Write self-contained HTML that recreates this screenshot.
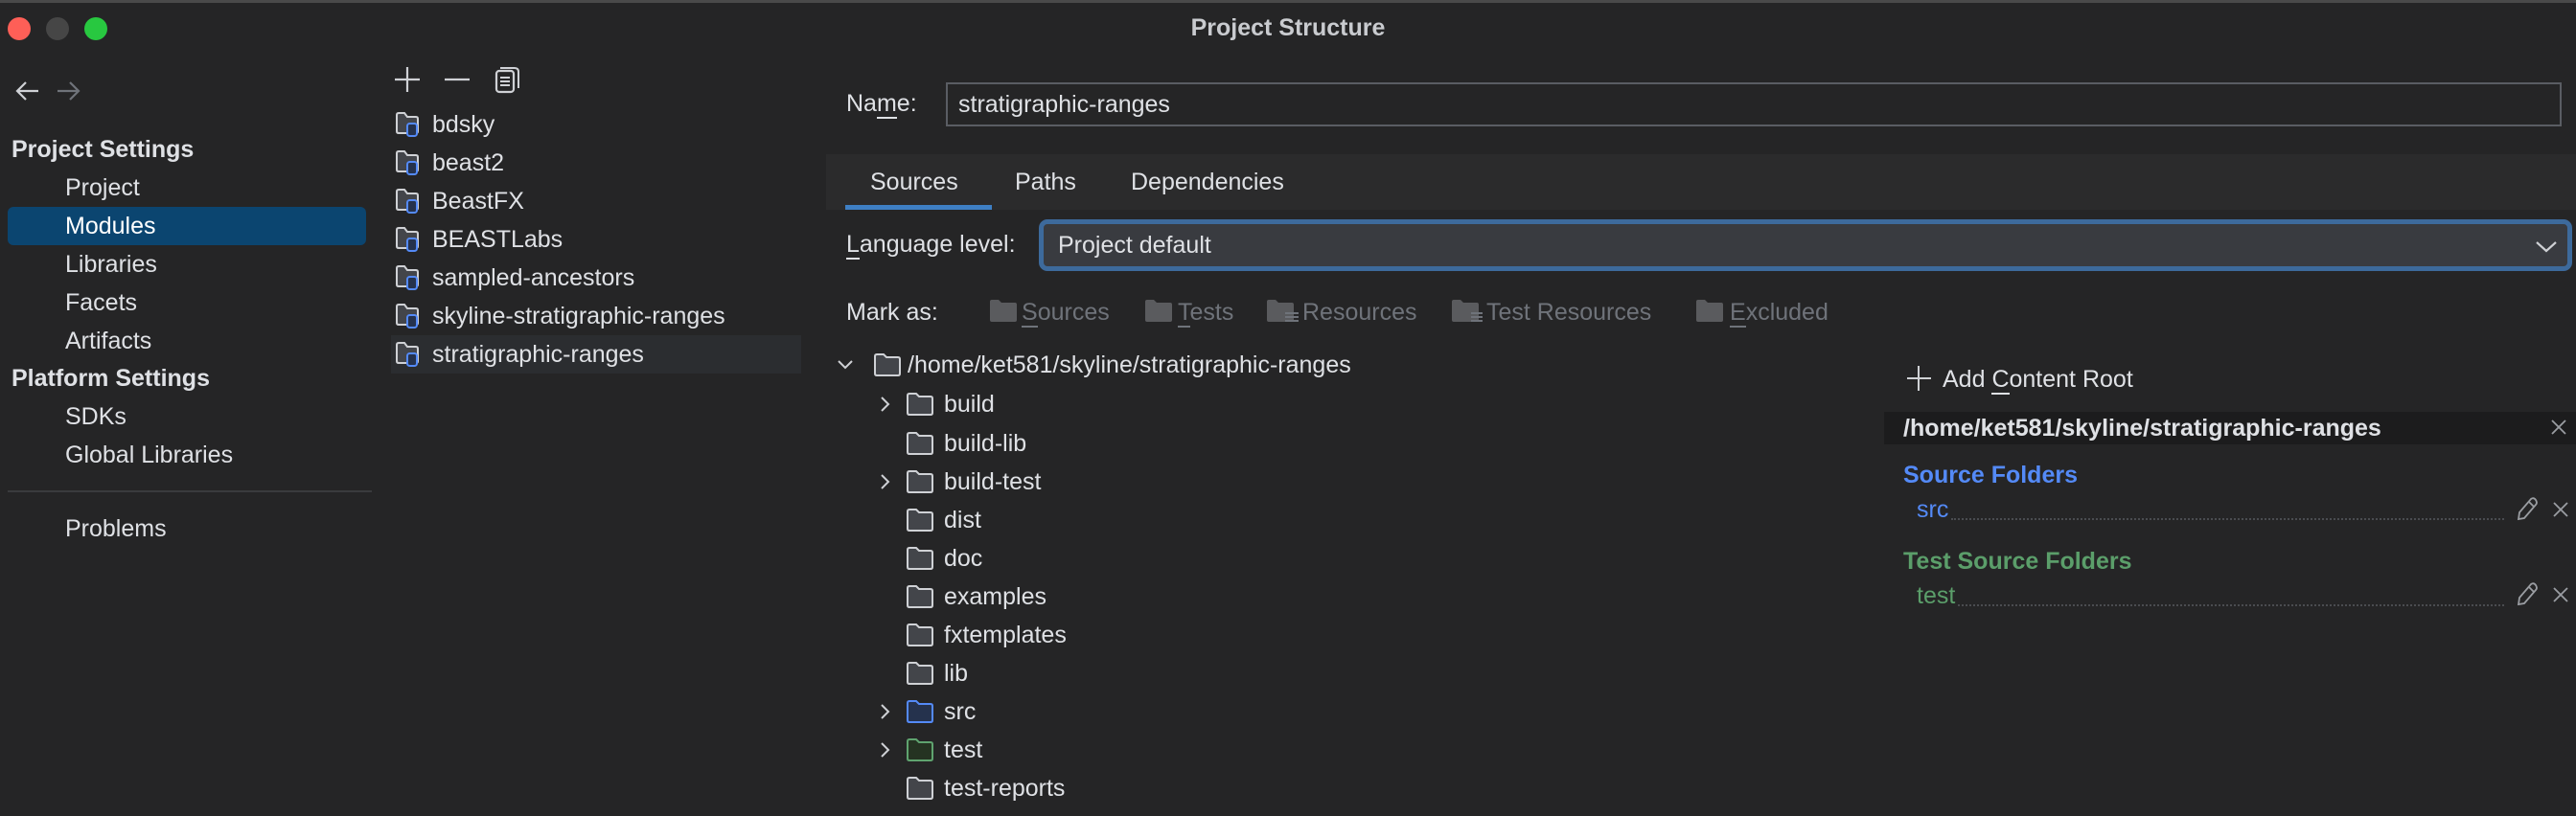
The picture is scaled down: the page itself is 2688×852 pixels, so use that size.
<!DOCTYPE html>
<html style="background:#252526"><head><meta charset="utf-8"><style>
*{margin:0;padding:0;box-sizing:border-box}
html,body{width:2688px;height:852px;overflow:hidden}
body{background:#252526;font-family:"Liberation Sans",sans-serif;color:#dfe1e5;font-size:25px;position:relative}
.t{position:absolute;line-height:30px;white-space:nowrap}
.b{font-weight:bold}
.g{color:#6f737a}
u{text-decoration:none;border-bottom:2px solid currentColor}
svg{position:absolute}
</style></head><body>
<div style="position:absolute;left:0;top:0;width:2688px;height:3px;background:#4a4a4a"></div>
<div style="position:absolute;left:8px;top:18px;width:24px;height:24px;border-radius:50%;background:#fe5f57"></div>
<div style="position:absolute;left:48px;top:18px;width:24px;height:24px;border-radius:50%;background:#464646"></div>
<div style="position:absolute;left:88px;top:18px;width:24px;height:24px;border-radius:50%;background:#28c840"></div>
<div class="t b" style="left:0;width:2688px;text-align:center;top:14px;color:#c9cbcf;font-size:25px">Project Structure</div>

<svg style="left:14px;top:82px" width="80" height="26"><path d="M4 13H26M13 4L4 13L13 22" stroke="#cfd1d5" stroke-width="2.2" fill="none"/><path d="M46 13H68M59 4L68 13L59 22" stroke="#6f737a" stroke-width="2.2" fill="none"/></svg>

<div class="t b" style="left:12px;top:141px">Project Settings</div>
<div style="position:absolute;left:8px;top:216px;width:374px;height:40px;border-radius:6px;background:#0b4570"></div>
<div class="t" style="left:68px;top:181px">Project</div>
<div class="t" style="left:68px;top:221px;color:#fff">Modules</div>
<div class="t" style="left:68px;top:261px">Libraries</div>
<div class="t" style="left:68px;top:301px">Facets</div>
<div class="t" style="left:68px;top:341px">Artifacts</div>
<div class="t b" style="left:12px;top:380px">Platform Settings</div>
<div class="t" style="left:68px;top:420px">SDKs</div>
<div class="t" style="left:68px;top:460px">Global Libraries</div>
<div style="position:absolute;left:8px;top:512px;width:380px;height:2px;background:#3a3b3d"></div>
<div class="t" style="left:68px;top:537px">Problems</div>

<svg style="left:410px;top:68px" width="140" height="30"><path d="M15 2V28M2 15H28" stroke="#cfd1d5" stroke-width="2.2"/><path d="M54 15H80" stroke="#cfd1d5" stroke-width="2.2"/><rect x="108" y="6" width="18" height="22" rx="3" stroke="#cfd1d5" stroke-width="2.2" fill="none"/><path d="M112 3H127Q131 3 131 7V24" stroke="#cfd1d5" stroke-width="2" fill="none"/><path d="M112 13H122M112 17H122M112 21H122" stroke="#cfd1d5" stroke-width="2"/></svg>

<div style="position:absolute;left:408px;top:350px;width:428px;height:40px;background:#2b2d30"></div>

<svg style="left:412px;top:116px" width="32" height="280">
<defs><g id="m"><path d="M2 4Q2 2 4 2H10L13 6H22Q24 6 24 8V21Q24 23 22 23H4Q2 23 2 21Z" fill="#43454a" stroke="#cfd1d5" stroke-width="2"/><rect x="13" y="13" width="10" height="13" rx="2.5" fill="#25324d" stroke="#548af7" stroke-width="2"/></g></defs>
<use href="#m" y="0"/><use href="#m" y="40"/><use href="#m" y="80"/><use href="#m" y="120"/><use href="#m" y="160"/><use href="#m" y="200"/><use href="#m" y="240"/>
</svg>
<div class="t" style="left:451px;top:115px">bdsky</div>
<div class="t" style="left:451px;top:155px">beast2</div>
<div class="t" style="left:451px;top:195px">BeastFX</div>
<div class="t" style="left:451px;top:235px">BEASTLabs</div>
<div class="t" style="left:451px;top:275px">sampled-ancestors</div>
<div class="t" style="left:451px;top:315px">skyline-stratigraphic-ranges</div>
<div class="t" style="left:451px;top:355px">stratigraphic-ranges</div>

<div class="t" style="left:883px;top:93px">Na<u>m</u>e:</div>
<div style="position:absolute;left:987px;top:86px;width:1686px;height:46px;border:2px solid #5a5d63;background:#252526"></div>
<div class="t" style="left:1000px;top:94px">stratigraphic-ranges</div>

<div style="position:absolute;left:862px;top:161px;width:1826px;height:58px;background:#2b2b2c"></div>
<div class="t" style="left:908px;top:175px">Sources</div>
<div class="t" style="left:1059px;top:175px">Paths</div>
<div class="t" style="left:1180px;top:175px">Dependencies</div>
<div style="position:absolute;left:882px;top:214px;width:153px;height:5px;background:#3e7fc4"></div>

<div class="t" style="left:883px;top:240px"><u>L</u>anguage level:</div>
<div style="position:absolute;left:1084px;top:229px;width:1600px;height:54px;border:5px solid #3d6a9c;border-radius:9px;background:#393b40"></div>
<div class="t" style="left:1104px;top:241px">Project default</div>
<svg style="left:2644px;top:250px" width="26" height="16"><path d="M3 3L13 12L23 3" stroke="#cfd1d5" stroke-width="2.2" fill="none"/></svg>

<div class="t" style="left:883px;top:311px">Mark as:</div>
<svg style="left:1030px;top:312px" width="900" height="40">
<defs><path id="f" d="M0 3Q0 1 2 1H9L12 4H26Q28 4 28 6V22Q28 24 26 24H2Q0 24 0 22Z" fill="#5a5b5e"/></defs>
<use href="#f" x="3"/><use href="#f" x="165"/><use href="#f" x="292"/><path d="M311 15H325M311 19H325M311 23H325" stroke="#6f737a" stroke-width="2"/>
<use href="#f" x="485"/><path d="M505 15H517M505 19H517M505 23H517" stroke="#6f737a" stroke-width="2"/>
<use href="#f" x="740"/>
</svg>
<div class="t g" style="left:1066px;top:311px"><u>S</u>ources</div>
<div class="t g" style="left:1229px;top:311px"><u>T</u>ests</div>
<div class="t g" style="left:1359px;top:311px">Resources</div>
<div class="t g" style="left:1551px;top:311px">Test Resources</div>
<div class="t g" style="left:1805px;top:311px"><u>E</u>xcluded</div>

<svg style="left:870px;top:360px" width="140" height="490">
<defs>
<path id="o" d="M1 3Q1 1 3 1H10L13 4H25Q27 4 27 6V21Q27 23 25 23H3Q1 23 1 21Z" fill="#43454a" stroke="#cfd1d5" stroke-width="2"/>
<path id="c" d="M0 0L7 7L0 14" stroke="#cfd1d5" stroke-width="2" fill="none"/>
</defs>
<path d="M5 17L12 24L19 17" stroke="#cfd1d5" stroke-width="2" fill="none"/>
<use href="#o" x="42" y="9"/>
<use href="#c" x="50" y="55"/><use href="#o" x="76" y="50"/>
<use href="#o" x="76" y="91"/>
<use href="#c" x="50" y="136"/><use href="#o" x="76" y="131"/>
<use href="#o" x="76" y="171"/>
<use href="#o" x="76" y="211"/>
<use href="#o" x="76" y="251"/>
<use href="#o" x="76" y="291"/>
<use href="#o" x="76" y="331"/>
<use href="#c" x="50" y="376"/><path d="M77 374Q77 372 79 372H86L89 375H101Q103 375 103 377V392Q103 394 101 394H79Q77 394 77 392Z" fill="#25324d" stroke="#548af7" stroke-width="2"/>
<use href="#c" x="50" y="416"/><path d="M77 414Q77 412 79 412H86L89 415H101Q103 415 103 417V432Q103 434 101 434H79Q77 434 77 432Z" fill="#253322" stroke="#5fa36f" stroke-width="2"/>
<use href="#o" x="76" y="451"/>
</svg>
<div class="t" style="left:947px;top:366px">/home/ket581/skyline/stratigraphic-ranges</div>
<div class="t" style="left:985px;top:407px">build</div>
<div class="t" style="left:985px;top:448px">build-lib</div>
<div class="t" style="left:985px;top:488px">build-test</div>
<div class="t" style="left:985px;top:528px">dist</div>
<div class="t" style="left:985px;top:568px">doc</div>
<div class="t" style="left:985px;top:608px">examples</div>
<div class="t" style="left:985px;top:648px">fxtemplates</div>
<div class="t" style="left:985px;top:688px">lib</div>
<div class="t" style="left:985px;top:728px">src</div>
<div class="t" style="left:985px;top:768px">test</div>
<div class="t" style="left:985px;top:808px">test-reports</div>

<svg style="left:1990px;top:382px" width="26" height="26"><path d="M12 0V26M0 13H25" stroke="#cfd1d5" stroke-width="2"/></svg>
<div class="t" style="left:2027px;top:381px">Add <u>C</u>ontent Root</div>
<div style="position:absolute;left:1966px;top:430px;width:722px;height:34px;background:#1c1c1d"></div>
<div class="t b" style="left:1986px;top:432px">/home/ket581/skyline/stratigraphic-ranges</div>
<svg style="left:2660px;top:436px" width="22" height="22"><path d="M3 3L17 17M17 3L3 17" stroke="#9a9da2" stroke-width="1.8"/></svg>
<div class="t b" style="left:1986px;top:481px;color:#548af7">Source Folders</div>
<div class="t" style="left:2000px;top:517px;color:#548af7">src</div>
<div style="position:absolute;left:2036px;top:541px;width:577px;border-top:2px dotted #4a4c50"></div>
<div class="t b" style="left:1986px;top:571px;color:#5b9e6a">Test Source Folders</div>
<div class="t" style="left:2000px;top:607px;color:#5b9e6a">test</div>
<div style="position:absolute;left:2043px;top:631px;width:570px;border-top:2px dotted #4a4c50"></div>
<svg style="left:2625px;top:518px" width="60" height="120">
<path d="M3 24L4 17L16 3Q19 1 21 4Q23 7 21 9L9 23Z M14 6L19 11" stroke="#9a9da2" stroke-width="1.8" fill="none"/>
<path d="M40 7L54 21M54 7L40 21" stroke="#9a9da2" stroke-width="1.8"/>
<path d="M3 113L4 106L16 92Q19 90 21 93Q23 96 21 98L9 112Z M14 95L19 100" stroke="#9a9da2" stroke-width="1.8" fill="none"/>
<path d="M40 96L54 110M54 96L40 110" stroke="#9a9da2" stroke-width="1.8"/>
</svg>
</body></html>
